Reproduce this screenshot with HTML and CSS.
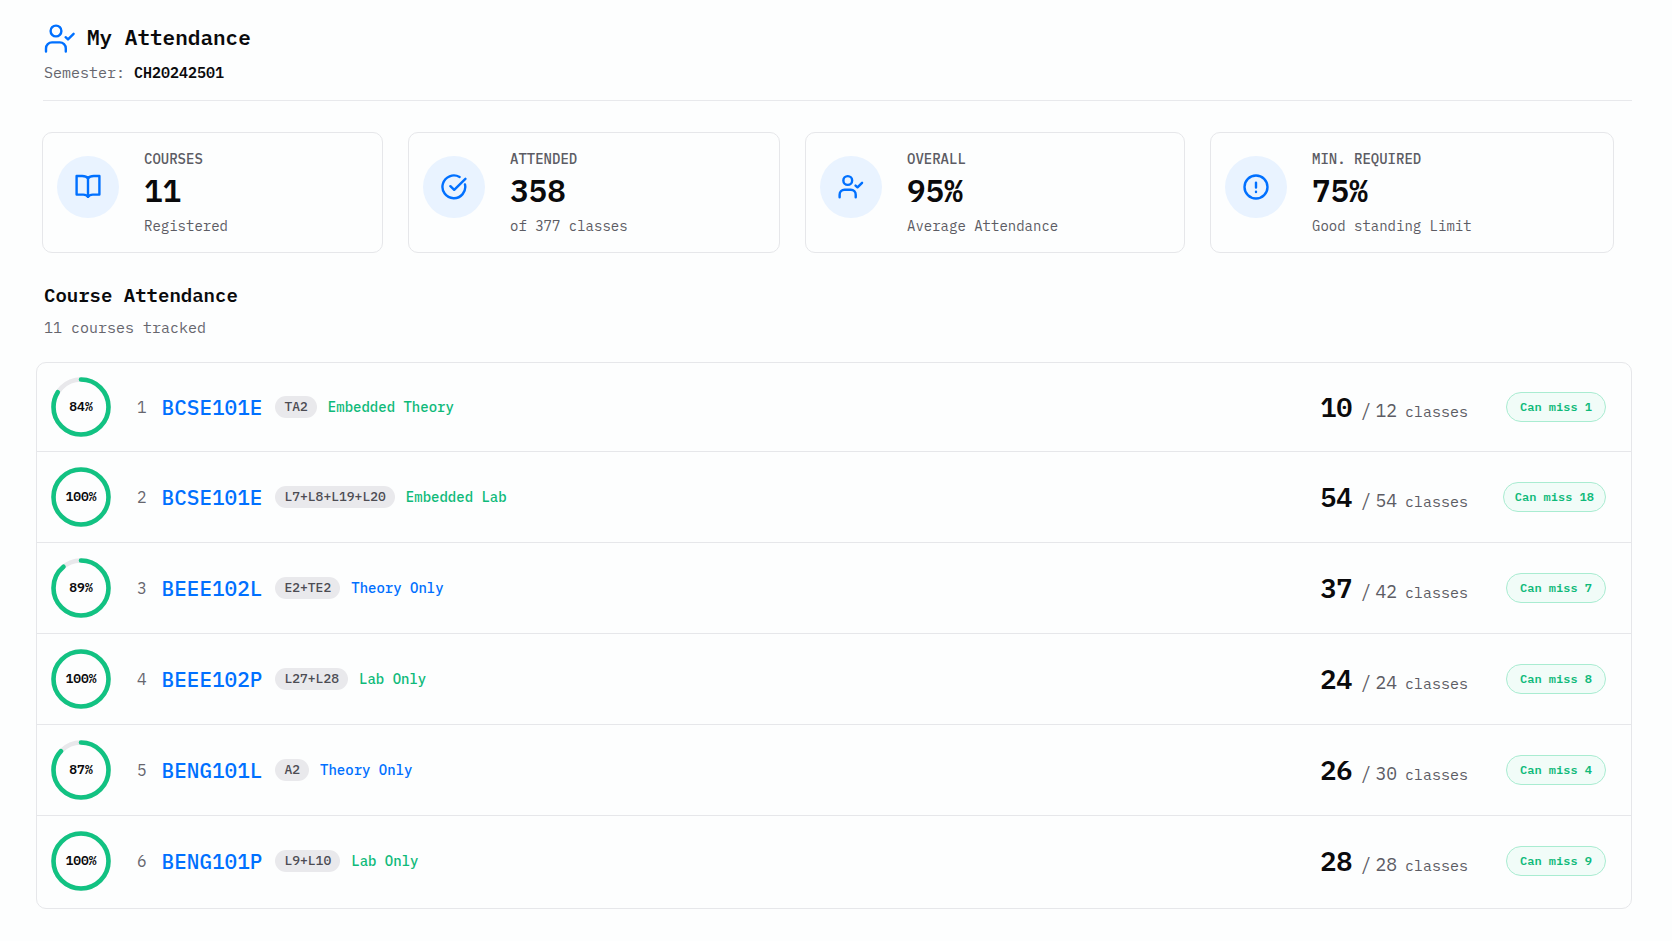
FILE: index.html
```html
<!DOCTYPE html>
<html lang="en">

<head>
    <meta charset="UTF-8">
    <meta name="viewport" content="width=device-width, initial-scale=1.0">
    <title>My Attendance</title>
    <link rel="stylesheet" href="styles.css">
</head>

<body>
    <!-- shared icons -->
    <svg class="sprite" aria-hidden="true">
        <symbol id="user-check" viewBox="0 0 32 32">
            <circle cx="12" cy="8" r="5.4" />
            <path d="M2 28.6v-3.2a6 6 0 0 1 6-6h7.8a6 6 0 0 1 6 6v3.2" />
            <path d="M21.6 14.2l2.4 2.2 5.6-5.6" />
        </symbol>
        <symbol id="book" viewBox="0 0 26 26">
            <path d="M13 4.2C11.6 2.4 9.6 2 7.2 2H1.6v18.6h6.6c2.2 0 3.8.5 4.8 2.2 1-1.7 2.6-2.2 4.8-2.2h6.6V2h-5.6C16.4 2 14.4 2.4 13 4.2z" />
            <path d="M13 4.2v18.6" />
        </symbol>
        <symbol id="check-circle" viewBox="0 0 26 26">
            <path d="M24 10.4A11.4 11.4 0 1 1 18.6 3" />
            <path d="M9.4 12.2l3.8 3.6L24.4 4.8" />
        </symbol>
        <symbol id="alert-circle" viewBox="0 0 26 26">
            <circle cx="13" cy="13" r="11.5" />
            <path d="M13 8.6v5M13 17.8v.2" />
        </symbol>
    </svg>

    <main class="page">
        <header class="header">
            <h1 class="title">
                <svg class="title-icon"><use href="#user-check" /></svg>
                My Attendance
            </h1>
            <p class="semester">Semester: <strong>CH20242501</strong></p>
        </header>

        <section class="stats">
            <div class="stat">
                <div class="stat-icon"><svg><use href="#book" /></svg></div>
                <div>
                    <p class="stat-label">COURSES</p>
                    <p class="stat-value">11</p>
                    <p class="stat-note">Registered</p>
                </div>
            </div>
            <div class="stat">
                <div class="stat-icon"><svg><use href="#check-circle" /></svg></div>
                <div>
                    <p class="stat-label">ATTENDED</p>
                    <p class="stat-value">358</p>
                    <p class="stat-note">of 377 classes</p>
                </div>
            </div>
            <div class="stat">
                <div class="stat-icon"><svg class="user"><use href="#user-check" /></svg></div>
                <div>
                    <p class="stat-label">OVERALL</p>
                    <p class="stat-value">95%</p>
                    <p class="stat-note">Average Attendance</p>
                </div>
            </div>
            <div class="stat">
                <div class="stat-icon"><svg><use href="#alert-circle" /></svg></div>
                <div>
                    <p class="stat-label">MIN. REQUIRED</p>
                    <p class="stat-value">75%</p>
                    <p class="stat-note">Good standing Limit</p>
                </div>
            </div>
        </section>

        <section>
            <div class="section-head">
                <h2>Course Attendance</h2>
                <p>11 courses tracked</p>
            </div>

            <ul class="courses">
                <li class="course">
                    <div class="ring">
                        <svg viewBox="0 0 60 60">
                            <circle class="track" cx="30" cy="30" r="27.5" />
                            <circle class="bar" cx="30" cy="30" r="27.5" pathLength="100" style="stroke-dasharray: 84 100" />
                        </svg>
                        <span>84%</span>
                    </div>
                    <span class="index">1</span>
                    <span class="code">BCSE101E</span>
                    <span class="slot">TA2</span>
                    <span class="type green">Embedded Theory</span>
                    <p class="count"><b>10</b><span class="total"><i>/</i>12</span><small>classes</small></p>
                    <div class="status"><span class="badge">Can miss 1</span></div>
                </li>
                <li class="course">
                    <div class="ring">
                        <svg viewBox="0 0 60 60">
                            <circle class="track" cx="30" cy="30" r="27.5" />
                            <circle class="bar" cx="30" cy="30" r="27.5" pathLength="100" style="stroke-dasharray: 100 100" />
                        </svg>
                        <span>100%</span>
                    </div>
                    <span class="index">2</span>
                    <span class="code">BCSE101E</span>
                    <span class="slot">L7+L8+L19+L20</span>
                    <span class="type green">Embedded Lab</span>
                    <p class="count"><b>54</b><span class="total"><i>/</i>54</span><small>classes</small></p>
                    <div class="status"><span class="badge">Can miss 18</span></div>
                </li>
                <li class="course">
                    <div class="ring">
                        <svg viewBox="0 0 60 60">
                            <circle class="track" cx="30" cy="30" r="27.5" />
                            <circle class="bar" cx="30" cy="30" r="27.5" pathLength="100" style="stroke-dasharray: 89 100" />
                        </svg>
                        <span>89%</span>
                    </div>
                    <span class="index">3</span>
                    <span class="code">BEEE102L</span>
                    <span class="slot">E2+TE2</span>
                    <span class="type blue">Theory Only</span>
                    <p class="count"><b>37</b><span class="total"><i>/</i>42</span><small>classes</small></p>
                    <div class="status"><span class="badge">Can miss 7</span></div>
                </li>
                <li class="course">
                    <div class="ring">
                        <svg viewBox="0 0 60 60">
                            <circle class="track" cx="30" cy="30" r="27.5" />
                            <circle class="bar" cx="30" cy="30" r="27.5" pathLength="100" style="stroke-dasharray: 100 100" />
                        </svg>
                        <span>100%</span>
                    </div>
                    <span class="index">4</span>
                    <span class="code">BEEE102P</span>
                    <span class="slot">L27+L28</span>
                    <span class="type green">Lab Only</span>
                    <p class="count"><b>24</b><span class="total"><i>/</i>24</span><small>classes</small></p>
                    <div class="status"><span class="badge">Can miss 8</span></div>
                </li>
                <li class="course">
                    <div class="ring">
                        <svg viewBox="0 0 60 60">
                            <circle class="track" cx="30" cy="30" r="27.5" />
                            <circle class="bar" cx="30" cy="30" r="27.5" pathLength="100" style="stroke-dasharray: 87 100" />
                        </svg>
                        <span>87%</span>
                    </div>
                    <span class="index">5</span>
                    <span class="code">BENG101L</span>
                    <span class="slot">A2</span>
                    <span class="type blue">Theory Only</span>
                    <p class="count"><b>26</b><span class="total"><i>/</i>30</span><small>classes</small></p>
                    <div class="status"><span class="badge">Can miss 4</span></div>
                </li>
                <li class="course">
                    <div class="ring">
                        <svg viewBox="0 0 60 60">
                            <circle class="track" cx="30" cy="30" r="27.5" />
                            <circle class="bar" cx="30" cy="30" r="27.5" pathLength="100" style="stroke-dasharray: 100 100" />
                        </svg>
                        <span>100%</span>
                    </div>
                    <span class="index">6</span>
                    <span class="code">BENG101P</span>
                    <span class="slot">L9+L10</span>
                    <span class="type green">Lab Only</span>
                    <p class="count"><b>28</b><span class="total"><i>/</i>28</span><small>classes</small></p>
                    <div class="status"><span class="badge">Can miss 9</span></div>
                </li>
            </ul>
        </section>
    </main>
</body>

</html>
```

FILE: styles.css
```css
* {
    margin: 0;
    padding: 0;
    box-sizing: border-box;
}

body {
    font-family: "IBM Plex Mono", "Liberation Mono", monospace;
    font-size: 15px;
    line-height: 20px;
    color: #0a0a0c;
    background-color: #fdfefe;
}

h1,
h2,
b,
strong {
    font-weight: 600;
}

ul {
    list-style: none;
}

svg {
    fill: none;
    stroke: #0070ff;
    stroke-width: 2.4;
    stroke-linecap: round;
    stroke-linejoin: round;
}

.sprite {
    display: none;
}

.page {
    padding: 21px 40px 32px 36px;
}

/* header */
.header {
    margin-left: 7px;
    padding: 0 0 17px 1px;
    border-bottom: 1px solid #e8e9ec;
}

.title {
    display: flex;
    align-items: center;
    gap: 11px;
    height: 32px;
    font-size: 21px;
}

.title-icon {
    width: 32px;
    height: 32px;
    margin-top: 4px;
}

.semester {
    margin-top: 10px;
    color: #66666e;
}

.semester strong {
    color: #0a0a0c;
}

/* summary cards */
.stats {
    display: grid;
    grid-template-columns: 341fr 372fr 380fr 404fr;
    gap: 25px;
    margin: 31px 18px 0 6px;
}

.stat {
    display: flex;
    align-items: flex-start;
    gap: 25px;
    padding: 16px 14px;
    border: 1px solid #e6e7ea;
    border-radius: 10px;
}

.stat-icon {
    flex: none;
    display: grid;
    place-items: center;
    width: 62px;
    height: 62px;
    margin-top: 7px;
    border-radius: 50%;
    background-color: #e9f3ff;
}

.stat-icon svg {
    width: 26px;
    height: 26px;
}

.stat-icon .user {
    stroke-width: 3;
}

.stat-label,
.stat-note {
    font-size: 14px;
    color: #5c5c64;
}

.stat-label {
    font-weight: 500;
}

.stat-value {
    margin: 4px 0 7px;
    font-size: 31px;
    line-height: 36px;
    font-weight: 600;
}

/* course list */
.section-head {
    margin: 30px 0 24px 8px;
}

.section-head h2 {
    font-size: 19px;
    line-height: 24px;
}

.section-head p {
    margin-top: 11px;
    color: #66666e;
}

.courses {
    border: 1px solid #e6e7ea;
    border-radius: 10px;
}

.course {
    display: flex;
    align-items: center;
    padding: 15px 25px 15px 14px;
    border-bottom: 1px solid #e6e7ea;
}

.course:first-child {
    padding-top: 14px;
    padding-bottom: 14px;
}

.course:last-child {
    padding-bottom: 17px;
    border-bottom: none;
}

.ring {
    display: grid;
    place-items: center;
    width: 60px;
    height: 60px;
}

.ring svg,
.ring span {
    grid-area: 1 / 1;
}

.ring svg {
    width: 60px;
    height: 60px;
    stroke-width: 4.6;
    transform: rotate(-90deg);
}

.ring .track {
    stroke: #e8e8eb;
}

.ring .bar {
    stroke: #12c282;
}

.ring span {
    font-size: 13px;
    font-weight: 600;
}

.index {
    margin: 0 15px 0 26px;
    font-size: 16px;
    color: #66666e;
}

.code {
    font-size: 21px;
    font-weight: 500;
    color: #0070ff;
}

.slot {
    margin: 0 11px 0 13px;
    padding: 1px 9px;
    border-radius: 11px;
    font-size: 13px;
    font-weight: 500;
    color: #4c4c53;
    background-color: #e9e9ec;
}

.type {
    font-size: 14px;
    font-weight: 500;
}

.green {
    color: #0fba7a;
}

.blue {
    color: #0070ff;
}

.count {
    display: flex;
    align-items: baseline;
    gap: 8px;
    margin-left: auto;
    color: #5c5c64;
}

.count b {
    font-size: 27px;
    line-height: 32px;
    color: #0a0a0c;
}

.total {
    font-size: 18px;
}

.total i {
    margin-right: 4px;
    font-style: normal;
}

.count small {
    font-size: 15px;
}

.status {
    display: flex;
    justify-content: flex-end;
    width: 138px;
}

.badge {
    min-width: 100px;
    padding: 4px 11px;
    border: 1px solid #a9ecd1;
    border-radius: 15px;
    font-size: 12px;
    font-weight: 600;
    text-align: center;
    color: #0fba7a;
    background-color: #f1fcf8;
}
```
